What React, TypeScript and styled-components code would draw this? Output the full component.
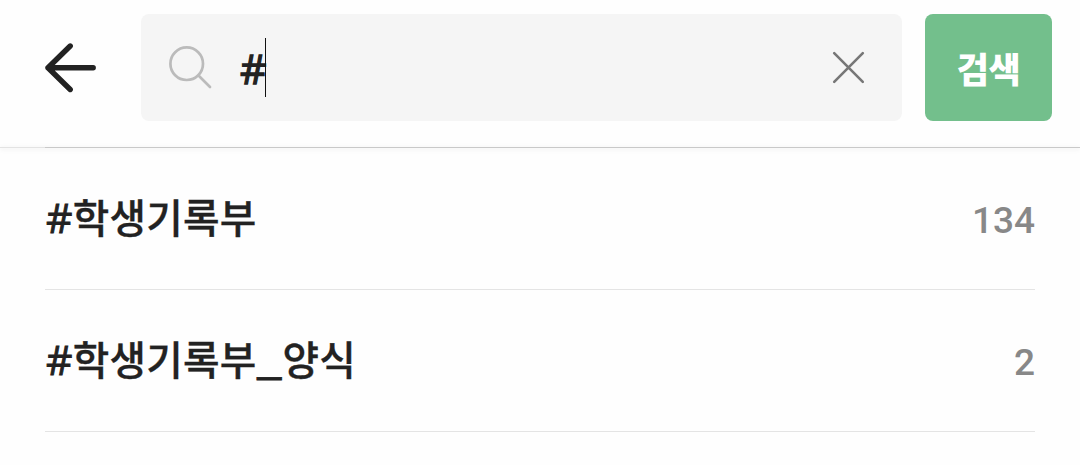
import React from 'react';
import styled, { createGlobalStyle } from 'styled-components';

const GlobalStyle = createGlobalStyle`
  * { box-sizing: border-box; }
  body {
    margin: 0;
    background: #fefefe;
    color: #222;
    font-family: Roboto, 'Noto Sans CJK KR', sans-serif;
  }
`;

const Screen = styled.main`
  height: 465px;
  overflow: hidden;
`;

const Header = styled.header`
  display: flex;
  align-items: flex-start;
  height: 147px;
  padding: 14px 28px 0 45px;
`;

const BackButton = styled.button`
  display: flex;
  align-items: center;
  width: 96px;
  height: 107px;
  padding: 0;
  border: 0;
  background: none;
`;

const SearchField = styled.label`
  display: flex;
  align-items: center;
  width: 761px;
  height: 107px;
  padding: 0 36px 0 27px;
  border-radius: 8px;
  background: #f5f5f5;
`;

const Query = styled.span`
  flex: 1;
  display: flex;
  align-items: center;
  margin-left: 27px;
`;

const Hash = styled.span<{ $stroke: number }>`
  font-family: 'Open Sans', sans-serif;
  font-size: 41px;
  font-weight: 400;
  line-height: 58px;
  letter-spacing: 0.3px;
  -webkit-text-stroke: ${({ $stroke }) => $stroke}px #222;
`;

const Underscore = styled.span`
  margin: 0 1px;
  font-family: 'Liberation Sans', sans-serif;
  font-size: 42.5px;
  font-weight: 400;
  line-height: 40px;
  vertical-align: 3px;
  -webkit-text-stroke: 0.8px #222;
`;

const Caret = styled.i`
  width: 1px;
  height: 59px;
  margin-left: -2px;
  background: #111;
`;

const SearchButton = styled.button`
  width: 127px;
  height: 107px;
  margin-left: 23px;
  padding: 0;
  border: 0;
  border-radius: 8px;
  background: #73bf8c;
  color: #fff;
  font: 900 35px/50px 'Noto Sans CJK KR', sans-serif;
  letter-spacing: -0.4px;
`;

const Divider = styled.div`
  height: 1px;
  padding-left: 45px;
  background: #e3e3e3;
  box-shadow: 0 1px 5px rgba(0, 0, 0, 0.15);
  &::after {
    content: '';
    display: block;
    height: 1px;
    background: #c9c9c9;
  }
`;

const Results = styled.ul`
  margin: 0;
  padding: 0 45px;
  list-style: none;
`;

const Result = styled.li`
  display: flex;
  align-items: center;
  justify-content: space-between;
  height: 142px;
  border-bottom: 1px solid #e4e4e4;
`;

const Tag = styled.span`
  padding: 0 0 6px 1px;
  font-family: 'Noto Sans CJK KR', sans-serif;
  font-size: 39.7px;
  font-weight: 500;
  line-height: 60px;
  letter-spacing: 0.25px;
  -webkit-text-stroke: 0.35px #222;
`;

const Count = styled.span`
  padding-top: 4px;
  color: #888;
  font-size: 37px;
  font-weight: 500;
  line-height: 44px;
`;

const tags = [
  { words: ['학생기록부'], count: 134 },
  { words: ['학생기록부', '양식'], count: 2 },
];

const BackIcon = () => (
  <svg width="52" height="52" viewBox="0 0 52 52" fill="none" stroke="#222" strokeWidth="5.4" strokeLinecap="round" strokeLinejoin="round">
    <path d="M25.2 4L3 25.7L25.2 47.5M3 25.7H48.2" />
  </svg>
);

const SearchIcon = () => (
  <svg width="45" height="45" viewBox="0 0 45 45" fill="none" stroke="#bbb" strokeWidth="2.7" strokeLinecap="round">
    <circle cx="18.7" cy="18.7" r="16.3" />
    <path d="M30.5 30.5L42 42" />
  </svg>
);

const ClearIcon = () => (
  <svg width="34" height="34" viewBox="0 0 34 34" fill="none" stroke="#777" strokeWidth="2.6" strokeLinecap="round">
    <path d="M2.2 2.2L30.8 30.8M30.8 2.2L2.2 30.8" />
  </svg>
);

export default function App() {
  return (
    <Screen>
      <GlobalStyle />
      <Header>
        <BackButton aria-label="뒤로"><BackIcon /></BackButton>
        <SearchField>
          <SearchIcon />
          <Query><Hash $stroke={1.3}>#</Hash><Caret /></Query>
          <ClearIcon />
        </SearchField>
        <SearchButton>검색</SearchButton>
      </Header>
      <Divider />
      <Results>
        {tags.map((tag) => (
          <Result key={tag.words.join('_')}>
            <Tag>
              <Hash $stroke={0.9}>#</Hash>
              {tag.words.map((word, i) => (
                <React.Fragment key={word}>
                  {i > 0 && <Underscore>_</Underscore>}
                  {word}
                </React.Fragment>
              ))}
            </Tag>
            <Count>{tag.count}</Count>
          </Result>
        ))}
      </Results>
    </Screen>
  );
}
